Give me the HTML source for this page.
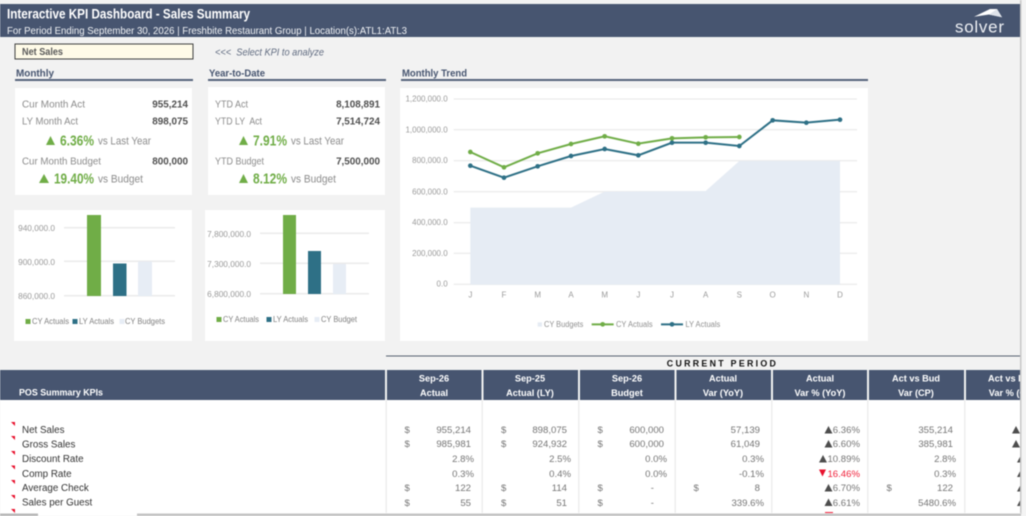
<!DOCTYPE html>
<html lang="en"><head><meta charset="utf-8"><title>Interactive KPI Dashboard</title>
<style>
html,body{margin:0;padding:0;width:1026px;height:516px;overflow:hidden;background:#f2f2f2}
svg{display:block;filter:blur(.45px)}
text{font-family:"Liberation Sans",sans-serif;white-space:pre}
.b{font-weight:700}
.e{text-anchor:end}
.m{text-anchor:middle}
.lab{font-size:10.5px;fill:#8c8c8c}
.num{font-size:9.9px;fill:#505050;font-weight:700}
.sec{font-size:10.3px;fill:#475570;font-weight:700}
.pct{font-size:15px;fill:#70ad47;font-weight:700}
.vs{font-size:11.2px;fill:#8c8c8c}
.ax{font-size:8.3px;fill:#9a9a9a}
.leg{font-size:8.2px;fill:#808080}
.th{font-size:9.2px;fill:#fff;font-weight:700}
.r{font-size:9.8px;fill:#333}
.v{font-size:9.6px;fill:#757575}
.z{font-size:24px;fill:#9a9a9a}
.zl{font-size:24px;fill:#909090}
</style></head><body>
<svg width="1026" height="516" viewBox="0 0 1026 516" xmlns="http://www.w3.org/2000/svg">
<defs><clipPath id="c"><rect x="0" y="400" width="1021" height="113"/></clipPath><clipPath id="h"><rect x="0" y="360" width="1021" height="45"/></clipPath></defs>
<rect width="1026" height="516" fill="#f2f2f2"/>

<!-- header -->
<rect x="0" y="4" width="1020" height="33" fill="#475570"/>
<text x="7" y="18.500" class="b" font-size="13.5" fill="#fff" textLength="243" lengthAdjust="spacingAndGlyphs">Interactive KPI Dashboard - Sales Summary</text>
<text x="7" y="34" font-size="10.2" fill="#f0f2f5" textLength="400" lengthAdjust="spacingAndGlyphs">For Period Ending September 30, 2026 | Freshbite Restaurant Group | Location(s):ATL1:ATL3</text>
<path d="M974 16.700 L990 9 L997 9 L1002 17.300 L989 14.500 Z" fill="#fff"/>
<path d="M989 14.500 L997 9 L1002 17.300 Z" fill="#dfe3ea"/>
<text x="955" y="32.500" font-size="17" fill="#eef0f4" textLength="49" lengthAdjust="spacing">solver</text>

<!-- selector -->
<rect x="15" y="44" width="178" height="15" fill="#fffbe8" stroke="#404040" stroke-width="1"/>
<text x="22" y="55" class="b" font-size="9.8" fill="#595959" textLength="41" lengthAdjust="spacingAndGlyphs">Net Sales</text>
<text x="215" y="55.500" font-size="10.2" font-style="italic" fill="#606b80" textLength="109" lengthAdjust="spacingAndGlyphs">&lt;&lt;&lt;  Select KPI to analyze</text>

<!-- section titles -->
<text x="16" y="76.500" class="sec" textLength="38" lengthAdjust="spacingAndGlyphs">Monthly</text>
<rect x="15" y="79" width="178" height="2" fill="#56637c"/>
<text x="209" y="76.500" class="sec" textLength="56" lengthAdjust="spacingAndGlyphs">Year-to-Date</text>
<rect x="208" y="79" width="178" height="2" fill="#56637c"/>
<text x="402" y="76.500" class="sec" textLength="65" lengthAdjust="spacingAndGlyphs">Monthly Trend</text>
<rect x="401" y="79" width="467" height="2" fill="#56637c"/>

<!-- cards -->
<rect x="15" y="88" width="177" height="107" fill="#fff"/>
<rect x="208" y="87" width="177" height="108" fill="#fff"/>
<rect x="14" y="210" width="178" height="131" fill="#fff"/>
<rect x="205" y="210" width="180" height="131" fill="#fff"/>
<rect x="400" y="88" width="468" height="253" fill="#fff"/>

<!-- monthly card -->
<text x="22" y="107.500" class="lab" textLength="63" lengthAdjust="spacingAndGlyphs">Cur Month Act</text>
<text x="188" y="107.500" class="num e">955,214</text>
<text x="22" y="124.500" class="lab" textLength="56" lengthAdjust="spacingAndGlyphs">LY Month Act</text>
<text x="188" y="124.500" class="num e">898,075</text>
<path d="M46 145 L50.500 136 L55 145Z" fill="#70ad47"/>
<text x="60" y="145.500" class="pct" textLength="34" lengthAdjust="spacingAndGlyphs">6.36%</text>
<text x="98" y="144.500" class="vs" textLength="53" lengthAdjust="spacingAndGlyphs">vs Last Year</text>
<text x="22" y="164.500" class="lab" textLength="79" lengthAdjust="spacingAndGlyphs">Cur Month Budget</text>
<text x="188" y="164.500" class="num e">800,000</text>
<path d="M39 183 L44 174 L49 183Z" fill="#70ad47"/>
<text x="54" y="183.500" class="pct" textLength="40" lengthAdjust="spacingAndGlyphs">19.40%</text>
<text x="98" y="182.500" class="vs" textLength="45" lengthAdjust="spacingAndGlyphs">vs Budget</text>

<!-- ytd card -->
<text x="215" y="107.500" class="lab" textLength="33" lengthAdjust="spacingAndGlyphs">YTD Act</text>
<text x="380" y="107.500" class="num e">8,108,891</text>
<text x="215" y="124.500" class="lab" textLength="47" lengthAdjust="spacingAndGlyphs">YTD LY  Act</text>
<text x="380" y="124.500" class="num e">7,514,724</text>
<path d="M239 145 L243.500 136 L248 145Z" fill="#70ad47"/>
<text x="253" y="145.500" class="pct" textLength="34" lengthAdjust="spacingAndGlyphs">7.91%</text>
<text x="291" y="144.500" class="vs" textLength="53" lengthAdjust="spacingAndGlyphs">vs Last Year</text>
<text x="215" y="164.500" class="lab" textLength="49" lengthAdjust="spacingAndGlyphs">YTD Budget</text>
<text x="380" y="164.500" class="num e">7,500,000</text>
<path d="M239 183 L243.500 174 L248 183Z" fill="#70ad47"/>
<text x="253" y="183.500" class="pct" textLength="34" lengthAdjust="spacingAndGlyphs">8.12%</text>
<text x="291" y="182.500" class="vs" textLength="45" lengthAdjust="spacingAndGlyphs">vs Budget</text>

<!-- bar chart 1 -->
<g fill="#ebebeb"><rect x="64" y="227" width="111" height="1.500"/><rect x="64" y="260.500" width="111" height="1.500"/><rect x="64" y="295" width="111" height="1.500"/></g>
<text x="55" y="231" class="ax e">940,000.0</text>
<text x="55" y="265" class="ax e">900,000.0</text>
<text x="55" y="299" class="ax e">860,000.0</text>
<rect x="87" y="215" width="14" height="81" fill="#70ad47"/>
<rect x="113" y="263.500" width="13.500" height="32.500" fill="#2e7086"/>
<rect x="138" y="261.500" width="14" height="34.500" fill="#e7edf5"/>
<rect x="25.500" y="319" width="5" height="5" fill="#70ad47"/><text x="32" y="324" class="leg" textLength="37" lengthAdjust="spacingAndGlyphs">CY Actuals</text>
<rect x="72.500" y="319" width="5" height="5" fill="#2e7086"/><text x="79" y="324" class="leg" textLength="35" lengthAdjust="spacingAndGlyphs">LY Actuals</text>
<rect x="119.500" y="319" width="5" height="5" fill="#e7edf5"/><text x="125" y="324" class="leg" textLength="40" lengthAdjust="spacingAndGlyphs">CY Budgets</text>

<!-- bar chart 2 -->
<g fill="#ebebeb"><rect x="260" y="232.500" width="109" height="1.500"/><rect x="260" y="262.500" width="109" height="1.500"/><rect x="260" y="293" width="109" height="1.500"/></g>
<text x="251" y="237" class="ax e">7,800,000.0</text>
<text x="251" y="267" class="ax e">7,300,000.0</text>
<text x="251" y="297" class="ax e">6,800,000.0</text>
<rect x="283" y="215" width="13" height="79" fill="#70ad47"/>
<rect x="308" y="251" width="13" height="43" fill="#2e7086"/>
<rect x="333" y="264" width="13" height="30" fill="#e7edf5"/>
<rect x="216.500" y="317" width="5" height="5" fill="#70ad47"/><text x="223" y="322" class="leg" textLength="36" lengthAdjust="spacingAndGlyphs">CY Actuals</text>
<rect x="266.500" y="317" width="5" height="5" fill="#2e7086"/><text x="273" y="322" class="leg" textLength="35" lengthAdjust="spacingAndGlyphs">LY Actuals</text>
<rect x="314.500" y="317" width="5" height="5" fill="#e7edf5"/><text x="321" y="322" class="leg" textLength="36" lengthAdjust="spacingAndGlyphs">CY Budget</text>

<!-- trend chart (coords in 3x units) -->
<g transform="translate(395,60) scale(.33333)">
<g stroke="#ececec" stroke-width="4">
<path d="M176 117H1386M176 209H1386M176 302H1386M176 395H1386M176 488H1386M176 580H1386M176 673H1386"/>
</g>
<path d="M226 443 L528 443 L629 395 L932 393 L1033 303 L1335 303 L1335 674 L226 674Z" fill="#e6ecf4"/>
<text x="158" y="125" class="e" style="font-size:24px;fill:#9a9a9a">1,200,000.0</text>
<text x="158" y="217" class="e" style="font-size:24px;fill:#9a9a9a">1,000,000.0</text>
<text x="158" y="309" class="e" style="font-size:24px;fill:#9a9a9a">800,000.0</text>
<text x="158" y="403" class="e" style="font-size:24px;fill:#9a9a9a">600,000.0</text>
<text x="158" y="495" class="e" style="font-size:24px;fill:#9a9a9a">400,000.0</text>
<text x="158" y="588" class="e" style="font-size:24px;fill:#9a9a9a">200,000.0</text>
<text x="158" y="680" class="e" style="font-size:24px;fill:#9a9a9a">0.0</text>
<text x="226" y="713" class="z m">J</text><text x="327" y="713" class="z m">F</text><text x="428" y="713" class="z m">M</text><text x="528" y="713" class="z m">A</text><text x="629" y="713" class="z m">M</text><text x="730" y="713" class="z m">J</text><text x="831" y="713" class="z m">J</text><text x="932" y="713" class="z m">A</text><text x="1033" y="713" class="z m">S</text><text x="1133" y="713" class="z m">O</text><text x="1234" y="713" class="z m">N</text><text x="1335" y="713" class="z m">D</text>
<polyline fill="none" stroke="#2e7086" stroke-width="6" points="226,317 327,353 428,319 528,288 629,267 730,286 831,248 932,248 1033,258 1133,181 1234,188 1335,179"/>
<g fill="#2e7086"><circle cx="226" cy="317" r="7"/><circle cx="327" cy="353" r="7"/><circle cx="428" cy="319" r="7"/><circle cx="528" cy="288" r="7"/><circle cx="629" cy="267" r="7"/><circle cx="730" cy="286" r="7"/><circle cx="831" cy="248" r="7"/><circle cx="932" cy="248" r="7"/><circle cx="1033" cy="258" r="7"/><circle cx="1133" cy="181" r="7"/><circle cx="1234" cy="188" r="7"/><circle cx="1335" cy="179" r="7"/></g>
<polyline fill="none" stroke="#70ad47" stroke-width="6" points="226,276 327,322 428,280 528,252 629,229 730,251 831,235 932,232 1033,231"/>
<g fill="#70ad47"><circle cx="226" cy="276" r="7"/><circle cx="327" cy="322" r="7"/><circle cx="428" cy="280" r="7"/><circle cx="528" cy="252" r="7"/><circle cx="629" cy="229" r="7"/><circle cx="730" cy="251" r="7"/><circle cx="831" cy="235" r="7"/><circle cx="932" cy="232" r="7"/><circle cx="1033" cy="231" r="7"/></g>
<rect x="428" y="787" width="13" height="13" fill="#e6ecf4"/>
<text x="447" y="801" class="zl" textLength="118" lengthAdjust="spacingAndGlyphs">CY Budgets</text>
<path d="M590 793H656" stroke="#70ad47" stroke-width="6"/><circle cx="623" cy="793" r="7" fill="#70ad47"/>
<text x="663" y="801" class="zl" textLength="110" lengthAdjust="spacingAndGlyphs">CY Actuals</text>
<path d="M798 793H864" stroke="#2e7086" stroke-width="6"/><circle cx="831" cy="793" r="7" fill="#2e7086"/>
<text x="871" y="801" class="zl" textLength="105" lengthAdjust="spacingAndGlyphs">LY Actuals</text>
</g>

<!-- current period -->
<rect x="386" y="355.500" width="635" height="1" fill="#56606f"/>
<text x="722.500" y="366.500" class="b m" font-size="8.8" fill="#111" letter-spacing="2.3">CURRENT PERIOD</text>

<!-- table -->
<rect x="0" y="400" width="1021" height="113" fill="#fff"/>
<rect x="0" y="370" width="1021" height="30" fill="#475570"/>
<g fill="#eeeeee"><rect x="385.500" y="400" width="1.500" height="113"/><rect x="481.500" y="400" width="1.500" height="113"/><rect x="578" y="400" width="1.500" height="113"/><rect x="674.500" y="400" width="1.500" height="113"/><rect x="771" y="400" width="1.500" height="113"/><rect x="867" y="400" width="1.500" height="113"/><rect x="964" y="400" width="1.500" height="113"/></g>
<g fill="#f2f2f2"><rect x="385" y="370" width="2" height="30"/><rect x="481.500" y="370" width="2" height="30"/><rect x="578" y="370" width="2" height="30"/><rect x="674.500" y="370" width="2" height="30"/><rect x="771" y="370" width="2" height="30"/><rect x="867" y="370" width="2" height="30"/><rect x="964" y="370" width="2" height="30"/></g>
<text x="19" y="395.500" class="th" textLength="84" lengthAdjust="spacingAndGlyphs">POS Summary KPIs</text>
<g clip-path="url(#h)">
<text x="434" y="381.500" class="th m">Sep-26</text><text x="434" y="396" class="th m">Actual</text>
<text x="530" y="381.500" class="th m">Sep-25</text><text x="530" y="396" class="th m">Actual (LY)</text>
<text x="627" y="381.500" class="th m">Sep-26</text><text x="627" y="396" class="th m">Budget</text>
<text x="723" y="381.500" class="th m">Actual</text><text x="723" y="396" class="th m">Var (YoY)</text>
<text x="820" y="381.500" class="th m">Actual</text><text x="820" y="396" class="th m">Var % (YoY)</text>
<text x="916" y="381.500" class="th m">Act vs Bud</text><text x="916" y="396" class="th m">Var (CP)</text>
<text x="1012" y="381.500" class="th m">Act vs Bud</text><text x="1012" y="396" class="th m">Var % (CP)</text>
</g>

<g clip-path="url(#c)">
<g fill="#e8112d">
<path d="M11 422l4 0 0 4z"/><path d="M11 436l4 0 0 4z"/><path d="M11 451l4 0 0 4z"/><path d="M11 465.500l4 0 0 4z"/><path d="M11 480l4 0 0 4z"/><path d="M11 495l4 0 0 4z"/><path d="M11 509l4 0 0 4z"/>
</g>
<text x="22" y="433" class="r">Net Sales</text>
<text x="22" y="447.500" class="r">Gross Sales</text>
<text x="22" y="462" class="r">Discount Rate</text>
<text x="22" y="477" class="r">Comp Rate</text>
<text x="22" y="491" class="r">Average Check</text>
<text x="22" y="505.500" class="r">Sales per Guest</text>

<!-- actual -->
<text x="404.500" y="433" class="v">$</text><text x="471" y="433" class="v e">955,214</text>
<text x="404.500" y="447" class="v">$</text><text x="471" y="447" class="v e">985,981</text>
<text x="474" y="462" class="v e">2.8%</text>
<text x="474" y="477" class="v e">0.3%</text>
<text x="404.500" y="491" class="v">$</text><text x="471" y="491" class="v e">122</text>
<text x="404.500" y="506" class="v">$</text><text x="471" y="506" class="v e">55</text>
<!-- ly -->
<text x="501" y="433" class="v">$</text><text x="567" y="433" class="v e">898,075</text>
<text x="501" y="447" class="v">$</text><text x="567" y="447" class="v e">924,932</text>
<text x="571" y="462" class="v e">2.5%</text>
<text x="571" y="477" class="v e">0.4%</text>
<text x="501" y="491" class="v">$</text><text x="567" y="491" class="v e">114</text>
<text x="501" y="506" class="v">$</text><text x="567" y="506" class="v e">51</text>
<!-- budget -->
<text x="597.500" y="433" class="v">$</text><text x="664" y="433" class="v e">600,000</text>
<text x="597.500" y="447" class="v">$</text><text x="664" y="447" class="v e">600,000</text>
<text x="667" y="462" class="v e">0.0%</text>
<text x="667" y="477" class="v e">0.0%</text>
<text x="597.500" y="491" class="v">$</text><text x="654" y="491" class="v e">-</text>
<text x="597.500" y="506" class="v">$</text><text x="654" y="506" class="v e">-</text>
<!-- var -->
<text x="760" y="433" class="v e">57,139</text>
<text x="760" y="447" class="v e">61,049</text>
<text x="764" y="462" class="v e">0.3%</text>
<text x="764" y="477" class="v e">-0.1%</text>
<text x="693.500" y="491" class="v">$</text><text x="760" y="491" class="v e">8</text>
<text x="764" y="506" class="v e">339.6%</text>
<!-- var% -->
<g fill="#4d4d4d">
<path d="M824.500 433.500l4-7.500 4 7.500z"/><path d="M824.500 447.500l4-7.500 4 7.500z"/><path d="M819 462.500l4-7.500 4 7.500z"/><path d="M824.500 491.500l4-7.500 4 7.500z"/><path d="M824.500 506l4-7.500 4 7.500z"/>
</g>
<path d="M819 469.500h7l-3.500 7z" fill="#e8112d"/>
<text x="860" y="433" class="v e">6.36%</text>
<text x="860" y="447" class="v e">6.60%</text>
<text x="860" y="462" class="v e">10.89%</text>
<text x="860" y="477" class="v e" style="fill:#f0203a">16.46%</text>
<text x="860" y="491" class="v e">6.70%</text>
<text x="860" y="506" class="v e">6.61%</text>
<rect x="825" y="512" width="8" height="2" fill="#f0203a"/>
<!-- act vs bud -->
<text x="953" y="433" class="v e">355,214</text>
<text x="953" y="447" class="v e">385,981</text>
<text x="956" y="462" class="v e">2.8%</text>
<text x="956" y="477" class="v e">0.3%</text>
<text x="886.500" y="491" class="v">$</text><text x="953" y="491" class="v e">122</text>
<text x="956" y="506" class="v e">5480.6%</text>
<!-- last col -->
<g fill="#4d4d4d">
<path d="M1012 433.500l4-7.500 4 7.500z"/><path d="M1012 447.500l4-7.500 4 7.500z"/><path d="M1017 462.500l4-7.500 4 7.500z"/><path d="M1017 477l4-7.500 4 7.500z"/><path d="M1017 491.500l4-7.500 4 7.500z"/><path d="M1017 506l4-7.500 4 7.500z"/>
</g>
</g>

<!-- scrollbars -->
<rect x="1021" y="0" width="5" height="516" fill="#f4f4f4"/>
<rect x="1020" y="0" width="1.500" height="514" fill="#c8c8c8"/>
<rect x="0" y="513" width="1021" height="3" fill="#fff"/>
<rect x="0" y="513.500" width="38" height="2.500" fill="#b8b8b8"/>
<rect x="137" y="513.500" width="884" height="2.500" fill="#c4c4c4"/>
</svg>
</body></html>
